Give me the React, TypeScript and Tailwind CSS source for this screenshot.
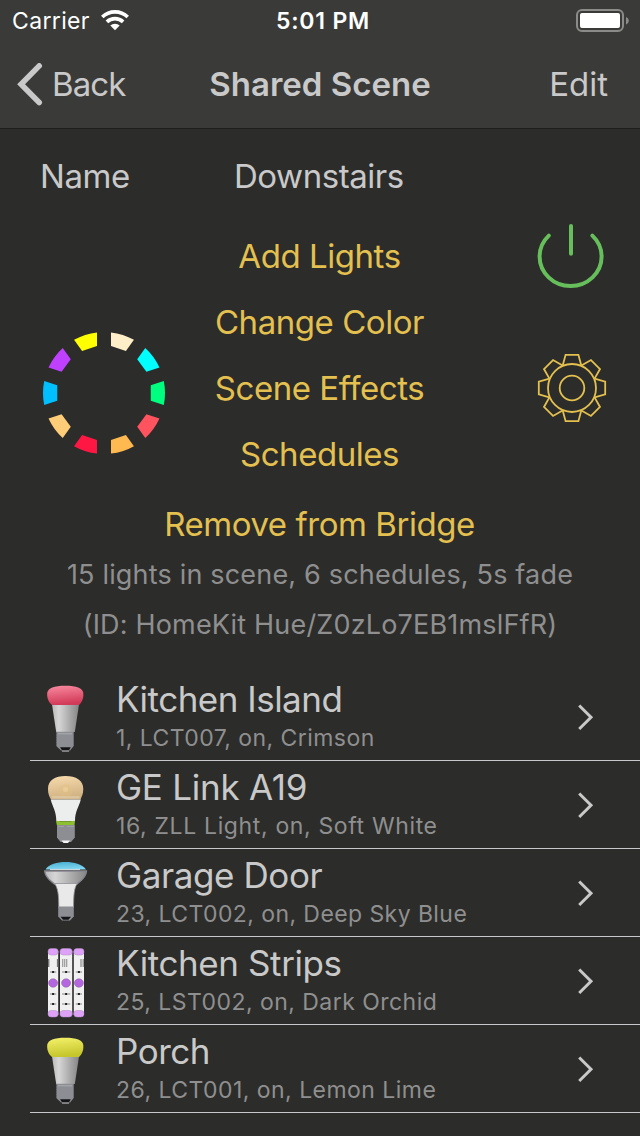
import React from 'react';

type BulbKind = 'hue' | 'ge' | 'flood' | 'strip';

interface Light {
  id: string;
  name: string;
  detail: string;
  kind: BulbKind;
  from: string;
  to: string;
  nameClass: string;
  detailClass: string;
}

const lights: Light[] = [
  { id: 'island', name: 'Kitchen Island', detail: '1, LCT007, on, Crimson', kind: 'hue', from: '#f98ba0', to: '#d23a59', nameClass: 'tracking-[-0.5px]', detailClass: 'tracking-[0.44px]' },
  { id: 'ge', name: 'GE Link A19', detail: '16, ZLL Light, on, Soft White', kind: 'ge', from: '#f9dcae', to: '#cfb182', nameClass: 'tracking-[-0.25px]', detailClass: 'tracking-[0.64px]' },
  { id: 'garage', name: 'Garage Door', detail: '23, LCT002, on, Deep Sky Blue', kind: 'flood', from: '#47aed0', to: '#80d5f0', nameClass: 'tracking-[-0.4px]', detailClass: 'tracking-[0.42px]' },
  { id: 'strips', name: 'Kitchen Strips', detail: '25, LST002, on, Dark Orchid', kind: 'strip', from: '#dda2f8', to: '#b565e0', nameClass: 'tracking-[-0.4px]', detailClass: 'tracking-[0.46px]' },
  { id: 'porch', name: 'Porch', detail: '26, LCT001, on, Lemon Lime', kind: 'hue', from: '#f5f26b', to: '#c5c52c', nameClass: 'tracking-[-0.5px]', detailClass: 'tracking-[0.46px]' },
];

// clockwise, starting just right of the top
const wheelColors = ['#ffefc8', '#00ffff', '#00ff7f', '#ff535f', '#ffb950', '#ff1744', '#ffcd78', '#00bfff', '#bf40ff', '#ffff00'];

const wedge = (index: number) => {
  const outer = 61;
  const inner = 47.4;
  const gap = 7;
  const start = (index * Math.PI) / 5;
  const end = start + Math.PI / 5;
  const point = (r: number, a: number) => `${(r * Math.sin(a)).toFixed(2)} ${(-r * Math.cos(a)).toFixed(2)}`;
  const o = Math.asin(gap / outer);
  const i = Math.asin(gap / inner);
  return `M${point(outer, start + o)} A${outer} ${outer} 0 0 1 ${point(outer, end - o)} L${point(inner, end - i)} L${point(inner, start + i)} Z`;
};

const ColorWheel: React.FC = () => (
  <svg width="124" height="124" viewBox="-62 -62 124 124">
    {wheelColors.map((color, index) => (
      <path key={color} d={wedge(index)} fill={color} />
    ))}
  </svg>
);

const PowerIcon: React.FC = () => (
  <svg width="70" height="70" viewBox="0 0 70 70" fill="none" stroke="#66bf5b" strokeWidth="4" strokeLinecap="round">
    <path d="M12.8 12.6 A31 29.5 0 1 0 56.4 12.6" />
    <path d="M35 3 V30.7" />
  </svg>
);

const GearIcon: React.FC = () => (
  <svg width="70" height="70" viewBox="-35 -35 70 70" fill="none" stroke="#e3c04f" strokeWidth="1.8">
    <circle r="24" />
    <circle r="12.3" />
    {[0, 45, 90, 135, 180, 225, 270, 315].map((angle) => (
      <path key={angle} d="M-9.3 -22.6 L-6.4 -33.2 H6.4 L9.3 -22.6" transform={`rotate(${angle})`} />
    ))}
  </svg>
);

const Bulb: React.FC<{ light: Light }> = ({ light }) => {
  const tint = `${light.id}-tint`;
  const metal = `${light.id}-metal`;
  return (
    <svg width="44" height="87" viewBox="0 0 44 87" className="shrink-0">
      <defs>
        <linearGradient id={tint} x1="0" y1="0" x2="0.2" y2="1">
          <stop offset="0" stopColor={light.from} />
          <stop offset="1" stopColor={light.to} />
        </linearGradient>
        <linearGradient id={metal}>
          <stop offset="0" stopColor="#b9b9b9" />
          <stop offset="0.25" stopColor="#d6d6d6" />
          <stop offset="1" stopColor="#858585" />
        </linearGradient>
      </defs>
      {light.kind === 'hue' && (
        <>
          <path d="M8 31.5 H35 L30.8 59 H12.2 Z" fill={`url(#${metal})`} />
          <path d="M3.2 20 C4 15 10 12.8 21.3 12.8 S38.5 15 39.3 20 C39.8 26 37.5 29.5 35 32 H8 C5 29.5 2.8 26 3.2 20 Z" fill={`url(#${tint})`} />
          <path d="M12.3 58.7 H29.7 V73 L26 77.5 H17 L12.3 73 Z" fill="#8d8e94" />
          <path d="M14 60.8 H28" stroke="#b4b4b9" strokeWidth="0.8" />
          <path d="M16 74.3 H26.8 L25 77.3 H18 Z" fill="#151518" />
          <path d="M18 77.5 H25 V78.7 H18 Z" fill="#a6a6a8" />
          <path d="M12.4 60 V73" stroke="#55565b" strokeWidth="0.7" strokeDasharray="1.5 1" />
        </>
      )}
      {light.kind === 'ge' && (
        <>
          <path d="M4 28 C4 19 11 15 21.5 15 S39.3 19 39.3 28 C39.3 33 37.5 36 36.5 38.5 H7 C5.5 36 4 33 4 28 Z" fill={`url(#${tint})`} />
          <circle cx="21.5" cy="30" r="7" fill="#e3c183" opacity="0.45" />
          <circle cx="21.5" cy="28.5" r="2.5" fill="#efd5a2" opacity="0.6" />
          <path d="M8 36.3 H35.5" stroke="#e0cba6" strokeWidth="2.4" opacity="0.8" />
          <path d="M6.7 38.5 H36.8 C35 46 31 50 31 60 H12.3 C12.3 50 8.5 46 6.7 38.5 Z" fill="#eceeed" />
          <path d="M12 59.7 Q21.5 61 31 59.7 L30.5 64 H12.8 Z" fill="#8ebe32" />
          <path d="M13 64 H30.8 V76.5 L27 81 H16.5 L13 76.5 Z" fill="#8d8e94" />
          <path d="M14 65.5 H20 M23 65.5 H30" stroke="#a5a5aa" strokeWidth="0.8" />
          <path d="M17.5 79.5 H26 L24 82 H19.5 Z" fill="#f4f4f4" />
        </>
      )}
      {light.kind === 'flood' && (
        <>
          <path d="M1.5 20.5 C5 15 13 13 21.5 13 S38 15 42 20.5 Z" fill={`url(#${tint})`} />
          <path d="M6 20.6 H36" stroke="#d9e4e6" strokeWidth="1" />
          <path d="M0.7 22 H42.5 C42 29 36 32 33 35 H10.5 C7 32 1.2 29 0.7 22 Z" fill={`url(#${metal})`} stroke="#85858d" strokeWidth="1.4" />
          <path d="M10.5 34.5 H33.3 C30 39 29.7 46 29.5 58.5 H14.8 C14.8 46 14 39 10.5 34.5 Z" fill="#e9e9e9" stroke="#96969b" strokeWidth="0.8" />
          <path d="M14.2 57.5 H29.8 V67.5 L26 71.5 H18 L14.2 67.5 Z" fill="#8d8e94" />
          <path d="M16.5 67.8 H27 L24.5 70.7 H19 Z" fill="#151518" />
        </>
      )}
      {light.kind === 'strip' &&
        [[4, 10.2], [16, 12.2], [29.8, 10.2]].map(([x, w]) => (
          <g key={x}>
            <rect x={x} y="14" width={w} height="64" fill="#f0f0f0" />
            <rect x={x} y="11.5" width={w} height="6.5" rx="3" fill={light.from} stroke="#b28bc5" strokeWidth="0.5" />
            <rect x={x} y="73.5" width={w} height="6.5" rx="3" fill={light.from} stroke="#b28bc5" strokeWidth="0.5" />
            {x === 4 && <path d="M4.7 22 v8 M13.6 22 v8" stroke="#777" strokeWidth="1.4" />}
            {x === 16 && <path d="M18.7 22 v8 M20.7 22 v8 M22.7 22 v8" stroke="#999" strokeWidth="1.2" />}
            {x === 29.8 && <path d="M37 22 v8 M39.2 22 v8" stroke="#888" strokeWidth="1.2" />}
            <ellipse cx={x + w / 2} cy="46" rx="4.5" ry="4.2" fill={light.to} stroke="#8f6ba3" strokeWidth="0.6" />
            <path d={`M${x + 2} 35 h${w - 4} M${x + 2} 57 h${w - 4} M${x + 2} 67 h${w - 4}`} stroke="#aaa" strokeWidth="1.3" />
            <path d={`M${x + w / 2 - 1} 35 h2 M${x + w / 2 - 1} 57 h2 M${x + w / 2 - 1} 67 h2`} stroke="#222" strokeWidth="2" />
          </g>
        ))}
    </svg>
  );
};

const StatusBar: React.FC = () => (
  <div className="flex h-[41px] items-center justify-between pl-3 pr-[11px] text-white">
    <div className="flex w-[200px] items-center gap-[11px]">
      <span className="pt-[2px] text-[23px] tracking-[0.35px]">Carrier</span>
      <svg width="28" height="21" viewBox="0 0 28 21" fill="none" stroke="#fff" strokeWidth="3.6">
        <path d="M1.3 7 A18.2 18.2 0 0 1 26.7 7" />
        <path d="M5.9 11.9 A11.7 11.7 0 0 1 22.1 11.9" />
        <path d="M14 20.3 L9.3 15.6 A6.7 6.7 0 0 1 18.7 15.6 Z" fill="#fff" stroke="none" />
      </svg>
    </div>
    <span className="pl-[5px] pt-[2px] text-[23px] font-semibold tracking-[0.8px]">5:01 PM</span>
    <div className="flex w-[200px] justify-end">
      <svg width="54" height="24" viewBox="0 0 54 24">
        <rect x="2" y="1" width="46" height="21" rx="5" fill="none" stroke="#8b8b8a" strokeWidth="2" />
        <rect x="5" y="4" width="40" height="15" rx="2" fill="#fff" />
        <path d="M51 8 C54.7 9.5 54.7 14 51 15.5 Z" fill="#8b8b8a" />
      </svg>
    </div>
  </div>
);

const NavBar: React.FC = () => (
  <div className="flex h-[87px] items-center justify-between pl-[17px] pr-8 text-[33px] text-[#c9c9c9]">
    <div className="flex w-[150px] items-center gap-[9px]">
      <svg width="26" height="44" viewBox="0 0 26 44" fill="none" stroke="currentColor" strokeWidth="5.6" strokeLinecap="round">
        <path d="M22.2 2.9 L4.1 21.2 L22.2 39.5" />
      </svg>
      <span className="tracking-[-0.9px]">Back</span>
    </div>
    <h1 className="font-semibold">Shared Scene</h1>
    <span className="w-[135px] text-right">Edit</span>
  </div>
);

const LightRow: React.FC<{ light: Light }> = ({ light }) => (
  <li className="ml-[30px] flex h-[88px] items-start border-b border-[#c8c7cc] pl-3.5 pr-[46px]">
    <Bulb light={light} />
    <div className="ml-7 flex flex-1 flex-col">
      <span className={`h-[46px] whitespace-nowrap pt-[3px] text-[35px] leading-[46px] text-[#c9c9c9] ${light.nameClass}`}>{light.name}</span>
      <span className={`h-[30px] whitespace-nowrap pt-[4px] text-[23px] leading-[31px] text-[#8f8f8f] ${light.detailClass}`}>{light.detail}</span>
    </div>
    <svg width="16" height="87" viewBox="0 0 16 87" fill="none" stroke="#c9c9c9" strokeWidth="3">
      <path d="M1.2 32.5 L13 44.2 L1.2 56" />
    </svg>
  </li>
);

const App: React.FC = () => {
  return (
    <div className="h-[1136px] w-[640px] overflow-hidden bg-[#2c2c2a] font-['Inter',sans-serif]">
      <header className="h-[129px] border-b border-[#1e1e1d] bg-[#3a3a38]">
        <StatusBar />
        <NavBar />
      </header>

      <main>
        <div className="flex h-[94px] items-center pl-10 pt-[2px] text-[33px] tracking-[-0.45px] text-[#c9c9c9]">
          <span className="w-[194px]">Name</span>
          <span>Downstairs</span>
        </div>

        <div className="grid h-[264px] grid-cols-[200px_240px_200px]">
          <div className="pl-[42px] pt-[108px]">
            <ColorWheel />
          </div>
          <div className="flex flex-col whitespace-nowrap pr-px text-center text-[33px] leading-[66px] tracking-[-0.45px] text-[#e3c04f]">
            <button type="button">Add Lights</button>
            <button type="button">Change Color</button>
            <button type="button">Scene Effects</button>
            <button type="button">Schedules</button>
          </div>
          <div className="flex flex-col items-end gap-[60px] pr-[33px]">
            <div className="mr-[1px] h-[70px]"><PowerIcon /></div>
            <div className="h-[70px]"><GearIcon /></div>
          </div>
        </div>

        <div className="flex flex-col whitespace-nowrap pb-[23px] pt-3 text-center text-[27px] leading-[50px] tracking-[0.18px] text-[#8f8f8f]">
          <button type="button" className="mb-[1px] pr-px text-[33px] tracking-[-0.45px] text-[#e3c04f]">Remove from Bridge</button>
          <p>15 lights in scene, 6 schedules, 5s fade</p>
          <p>(ID: HomeKit Hue/Z0zLo7EB1mslFfR)</p>
        </div>

        <ul>
          {lights.map((light) => (
            <LightRow key={light.id} light={light} />
          ))}
        </ul>
      </main>
    </div>
  );
};

export default App;
